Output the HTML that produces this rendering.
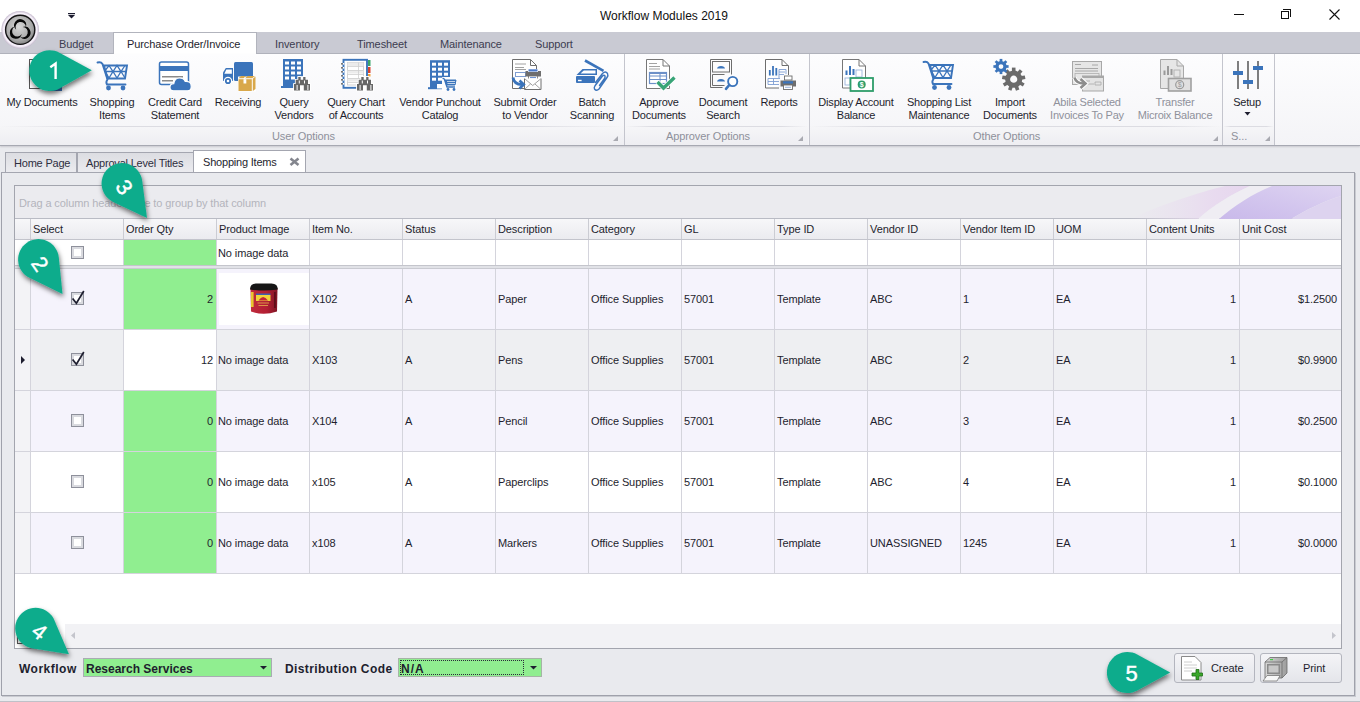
<!DOCTYPE html>
<html><head><meta charset="utf-8">
<style>
*{box-sizing:border-box}
html,body{margin:0;padding:0}
body{width:1360px;height:702px;overflow:hidden;position:relative;font-family:"Liberation Sans",sans-serif;font-size:11px;color:#1e1e2e;background:#e9eaee}
.a{position:absolute}
svg{position:absolute;left:0;top:0}
#title{left:0;top:0;width:1360px;height:32px;background:#fff}
#tabs{left:0;top:32px;width:1360px;height:22px;background:#c9cad3;border-bottom:1px solid #b1b3bc}
.rt{position:absolute;top:33px;height:21px;line-height:22px;color:#3c3c50;font-size:11px}
#rb{left:0;top:54px;width:1360px;height:92px;background:linear-gradient(#fdfdfe,#f4f4f7);border-bottom:1px solid #a7a9b2;box-shadow:0 1px 1.5px rgba(60,60,80,0.18)}
.gstrip{position:absolute;top:126px;height:19px;background:linear-gradient(#f6f6f8,#eeeef2)}
.gstrip::before{content:"";position:absolute;left:0;top:0;width:100%;height:1px;background:linear-gradient(to right,rgba(220,220,226,0),#dcdce2 15%,#dcdce2 85%,rgba(220,220,226,0))}
.sep{position:absolute;top:54px;width:1px;height:91px;background:#c4c5cd}
.lb{position:absolute;width:130px;text-align:center;line-height:13px;font-size:11px;color:#1e1e2e;letter-spacing:-0.2px;white-space:nowrap}
.dis{color:#8f919b}
.glt{position:absolute;top:130px;line-height:13px;font-size:11px;color:#8e909a;letter-spacing:-0.1px;white-space:nowrap}
.dl{position:absolute;top:136px;width:0;height:0;border-left:5px solid transparent;border-bottom:5px solid #a9aab1}
.dt{position:absolute;top:152px;height:20px;border:1px solid #a4a6b0;border-bottom:none;background:linear-gradient(#dcdde2,#ebebef);line-height:20px;padding-left:8px;color:#2e2e3e;letter-spacing:-0.2px}
.hdr{position:absolute;top:219px;height:20px;line-height:20px;padding-left:2px;color:#1e1e2e;letter-spacing:-0.1px}
.vl{position:absolute;width:1px;background:#d4d4dc}
.cell{position:absolute;height:60px;line-height:60px;letter-spacing:-0.1px;white-space:nowrap}
.cb{position:absolute;width:13px;height:13px;border:1px solid #8e909b;background:#fff;box-shadow:inset 0 0 0 2px #d9dadf}
</style></head><body>

<!-- ===== title bar ===== -->
<div id="title" class="a"></div>
<div class="a" style="left:600px;top:9px;font-size:12px;line-height:15px;color:#111">Workflow Modules 2019</div>
<!-- window controls -->
<div class="a" style="left:1234px;top:14px;width:10px;height:1px;background:#111"></div>
<div class="a" style="left:1283px;top:9px;width:8px;height:8px;border:1px solid #111;border-left:none;border-bottom:none"></div>
<div class="a" style="left:1281px;top:11px;width:8px;height:8px;border:1px solid #111;background:#fff"></div>
<svg width="1360" height="40" style="z-index:2">
  <path d="M1329.5 9.5 L1339.5 19.5 M1339.5 9.5 L1329.5 19.5" stroke="#111" stroke-width="1.1"/>
  <rect x="68" y="13" width="7" height="1.2" fill="#1c1c30"/>
  <path d="M68 15 L75 15 L71.5 18.5 Z" fill="#1c1c30"/>
</svg>

<!-- ===== ribbon tabs ===== -->
<div id="tabs" class="a"></div>
<div class="rt" style="left:59px;letter-spacing:-0.1px">Budget</div>
<div class="a" style="left:113px;top:32px;width:144px;height:22px;background:#fff;border:1px solid #b2b4bd;border-bottom:none"></div>
<div class="rt" style="left:127px;letter-spacing:-0.1px;color:#1e1e2e">Purchase Order/Invoice</div>
<div class="rt" style="left:275px;letter-spacing:-0.1px">Inventory</div>
<div class="rt" style="left:357px;letter-spacing:-0.1px">Timesheet</div>
<div class="rt" style="left:440px;letter-spacing:-0.1px">Maintenance</div>
<div class="rt" style="left:535px;letter-spacing:-0.1px">Support</div>

<!-- ===== ribbon body ===== -->
<div id="rb" class="a"></div>
<div class="gstrip" style="left:0;width:624px"></div>
<div class="gstrip" style="left:625px;width:183px"></div>
<div class="gstrip" style="left:810px;width:412px"></div>
<div class="gstrip" style="left:1223px;width:51px"></div>
<div class="sep" style="left:624px"></div>
<div class="sep" style="left:809px"></div>
<div class="sep" style="left:1222px"></div>
<div class="sep" style="left:1274px"></div>

<div class="lb" style="left:-23px;top:96px">My Documents</div>
<div class="lb" style="left:47px;top:96px">Shopping<br>Items</div>
<div class="lb" style="left:110px;top:96px">Credit Card<br>Statement</div>
<div class="lb" style="left:173px;top:96px">Receiving</div>
<div class="lb" style="left:229px;top:96px">Query<br>Vendors</div>
<div class="lb" style="left:291px;top:96px">Query Chart<br>of Accounts</div>
<div class="lb" style="left:375px;top:96px">Vendor Punchout<br>Catalog</div>
<div class="lb" style="left:460px;top:96px">Submit Order<br>to Vendor</div>
<div class="lb" style="left:527px;top:96px">Batch<br>Scanning</div>
<div class="lb" style="left:594px;top:96px">Approve<br>Documents</div>
<div class="lb" style="left:658px;top:96px">Document<br>Search</div>
<div class="lb" style="left:714px;top:96px">Reports</div>
<div class="lb" style="left:791px;top:96px">Display Account<br>Balance</div>
<div class="lb" style="left:874px;top:96px">Shopping List<br>Maintenance</div>
<div class="lb" style="left:945px;top:96px">Import<br>Documents</div>
<div class="lb dis" style="left:1022px;top:96px">Abila Selected<br>Invoices To Pay</div>
<div class="lb dis" style="left:1110px;top:96px">Transfer<br>Microix Balance</div>
<div class="lb" style="left:1182px;top:96px">Setup</div>

<div class="glt" style="left:272px">User Options</div>
<div class="glt" style="left:666px">Approver Options</div>
<div class="glt" style="left:973px">Other Options</div>
<div class="glt" style="left:1231px">S...</div>
<div class="dl" style="left:613px"></div>
<div class="dl" style="left:798px"></div>
<div class="dl" style="left:1213px"></div>
<div class="dl" style="left:1265px"></div>

<!-- ===== doc tabs ===== -->
<div class="dt" style="left:5px;width:72px">Home Page</div>
<div class="dt" style="left:77px;width:117px">Approval Level Titles</div>
<div class="a" style="left:193px;top:150px;width:113px;height:23px;background:#fff;border:1px solid #a4a6b0;border-bottom:none;line-height:22px;padding-left:9px;letter-spacing:-0.2px;color:#1e1e2e">Shopping Items</div>
<svg width="1360" height="702" style="z-index:2"><path d="M290.5 158.5 L298.5 165 M298.5 158.5 L290.5 165" stroke="#84868e" stroke-width="2.6"/></svg>

<!-- ===== content panel ===== -->
<div class="a" style="left:1px;top:172px;width:1354px;height:524px;border:1px solid #9fa1ab;border-top-color:#a4a6b0;background:#e9eaee;box-shadow:1px 1px 0 #c9cbd1"></div>
<div class="a" style="left:0;top:701px;width:1360px;height:1px;background:#bfc1c8"></div>
<!-- grid -->
<div class="a" style="left:14px;top:185px;width:1328px;height:464px;border:1px solid #a3a5ae;background:#fff"></div>
<!-- group panel -->
<div class="a" style="left:15px;top:186px;width:1326px;height:33px;background:#ebebef"></div>
<div class="a" style="left:19px;top:197px;line-height:13px;color:#b3b4bc;letter-spacing:-0.1px">Drag a column header here to group by that column</div>

<!-- overlays (icons etc.) injected below -->
<div class="a" style="left:15px;top:218px;width:1326px;height:1px;background:#b9bbc4"></div>
<div class="a" style="left:15px;top:219px;width:1326px;height:20px;background:linear-gradient(#f7f7f9,#ebebef)"></div>
<div class="a" style="left:15px;top:239px;width:1326px;height:1px;background:#c3c4cc"></div>
<div class="hdr" style="left:31px">Select</div>
<div class="hdr" style="left:124px">Order Qty</div>
<div class="hdr" style="left:217px">Product Image</div>
<div class="hdr" style="left:310px">Item No.</div>
<div class="hdr" style="left:403px">Status</div>
<div class="hdr" style="left:496px">Description</div>
<div class="hdr" style="left:589px">Category</div>
<div class="hdr" style="left:682px">GL</div>
<div class="hdr" style="left:775px">Type ID</div>
<div class="hdr" style="left:868px">Vendor ID</div>
<div class="hdr" style="left:961px">Vendor Item ID</div>
<div class="hdr" style="left:1054px">UOM</div>
<div class="hdr" style="left:1147px">Content Units</div>
<div class="hdr" style="left:1240px">Unit Cost</div>
<div class="a" style="left:30px;top:219px;width:1px;height:20px;background:#cbccd3"></div>
<div class="a" style="left:123px;top:219px;width:1px;height:20px;background:#cbccd3"></div>
<div class="a" style="left:216px;top:219px;width:1px;height:20px;background:#cbccd3"></div>
<div class="a" style="left:309px;top:219px;width:1px;height:20px;background:#cbccd3"></div>
<div class="a" style="left:402px;top:219px;width:1px;height:20px;background:#cbccd3"></div>
<div class="a" style="left:495px;top:219px;width:1px;height:20px;background:#cbccd3"></div>
<div class="a" style="left:588px;top:219px;width:1px;height:20px;background:#cbccd3"></div>
<div class="a" style="left:681px;top:219px;width:1px;height:20px;background:#cbccd3"></div>
<div class="a" style="left:774px;top:219px;width:1px;height:20px;background:#cbccd3"></div>
<div class="a" style="left:867px;top:219px;width:1px;height:20px;background:#cbccd3"></div>
<div class="a" style="left:960px;top:219px;width:1px;height:20px;background:#cbccd3"></div>
<div class="a" style="left:1053px;top:219px;width:1px;height:20px;background:#cbccd3"></div>
<div class="a" style="left:1146px;top:219px;width:1px;height:20px;background:#cbccd3"></div>
<div class="a" style="left:1239px;top:219px;width:1px;height:20px;background:#cbccd3"></div>
<div class="a" style="left:124px;top:240px;width:92px;height:25px;background:#90ee90"></div>
<div class="cell" style="left:218px;top:241px;height:25px;line-height:25px">No image data</div>
<div class="vl" style="left:30px;top:240px;height:25px"></div>
<div class="vl" style="left:123px;top:240px;height:25px"></div>
<div class="vl" style="left:216px;top:240px;height:25px"></div>
<div class="vl" style="left:309px;top:240px;height:25px"></div>
<div class="vl" style="left:402px;top:240px;height:25px"></div>
<div class="vl" style="left:495px;top:240px;height:25px"></div>
<div class="vl" style="left:588px;top:240px;height:25px"></div>
<div class="vl" style="left:681px;top:240px;height:25px"></div>
<div class="vl" style="left:774px;top:240px;height:25px"></div>
<div class="vl" style="left:867px;top:240px;height:25px"></div>
<div class="vl" style="left:960px;top:240px;height:25px"></div>
<div class="vl" style="left:1053px;top:240px;height:25px"></div>
<div class="vl" style="left:1146px;top:240px;height:25px"></div>
<div class="vl" style="left:1239px;top:240px;height:25px"></div>
<div class="cb" style="left:71px;top:246px"></div>
<div class="a" style="left:15px;top:265px;width:1326px;height:1px;background:#c4c5cc"></div>
<div class="a" style="left:15px;top:266px;width:1326px;height:2px;background:#e1e2e7"></div>
<div class="a" style="left:15px;top:268px;width:1326px;height:1px;background:#c9cad1"></div>
<div class="a" style="left:31px;top:269px;width:1310px;height:60px;background:#f5f3fc"></div>
<div class="a" style="left:15px;top:269px;width:15px;height:60px;background:#f3f3f6"></div>
<div class="a" style="left:124px;top:269px;width:92px;height:60px;background:#90ee90"></div>
<div class="a" style="left:15px;top:329px;width:1326px;height:1px;background:#d4d4dc"></div>
<div class="vl" style="left:30px;top:269px;height:60px"></div>
<div class="vl" style="left:123px;top:269px;height:60px"></div>
<div class="vl" style="left:216px;top:269px;height:60px"></div>
<div class="vl" style="left:309px;top:269px;height:60px"></div>
<div class="vl" style="left:402px;top:269px;height:60px"></div>
<div class="vl" style="left:495px;top:269px;height:60px"></div>
<div class="vl" style="left:588px;top:269px;height:60px"></div>
<div class="vl" style="left:681px;top:269px;height:60px"></div>
<div class="vl" style="left:774px;top:269px;height:60px"></div>
<div class="vl" style="left:867px;top:269px;height:60px"></div>
<div class="vl" style="left:960px;top:269px;height:60px"></div>
<div class="vl" style="left:1053px;top:269px;height:60px"></div>
<div class="vl" style="left:1146px;top:269px;height:60px"></div>
<div class="vl" style="left:1239px;top:269px;height:60px"></div>
<div class="cb" style="left:71px;top:292px"></div>
<svg width="1360" height="702" style="left:0;top:0;pointer-events:none"><path d="M72.6 298.5 L76.4 303.3 L83.8 291.0" fill="none" stroke="#1e1e30" stroke-width="1.7"/></svg>
<div class="cell" style="left:124px;top:269px;width:89px;text-align:right">2</div>
<div class="a" style="left:219px;top:273px;width:90px;height:52px;background:#fff"></div>
<!--CAN269-->
<div class="cell" style="left:312px;top:269px">X102</div>
<div class="cell" style="left:405px;top:269px">A</div>
<div class="cell" style="left:498px;top:269px">Paper</div>
<div class="cell" style="left:591px;top:269px">Office Supplies</div>
<div class="cell" style="left:684px;top:269px">57001</div>
<div class="cell" style="left:777px;top:269px">Template</div>
<div class="cell" style="left:870px;top:269px">ABC</div>
<div class="cell" style="left:963px;top:269px">1</div>
<div class="cell" style="left:1056px;top:269px">EA</div>
<div class="cell" style="left:1147px;top:269px;width:89px;text-align:right">1</div>
<div class="cell" style="left:1240px;top:269px;width:97px;text-align:right">$1.2500</div>
<div class="a" style="left:31px;top:330px;width:1310px;height:60px;background:#eeeff2"></div>
<div class="a" style="left:15px;top:330px;width:15px;height:60px;background:#f3f3f6"></div>
<div class="a" style="left:124px;top:330px;width:92px;height:60px;background:#ffffff"></div>
<div class="a" style="left:15px;top:390px;width:1326px;height:1px;background:#d4d4dc"></div>
<div class="vl" style="left:30px;top:330px;height:60px"></div>
<div class="vl" style="left:123px;top:330px;height:60px"></div>
<div class="vl" style="left:216px;top:330px;height:60px"></div>
<div class="vl" style="left:309px;top:330px;height:60px"></div>
<div class="vl" style="left:402px;top:330px;height:60px"></div>
<div class="vl" style="left:495px;top:330px;height:60px"></div>
<div class="vl" style="left:588px;top:330px;height:60px"></div>
<div class="vl" style="left:681px;top:330px;height:60px"></div>
<div class="vl" style="left:774px;top:330px;height:60px"></div>
<div class="vl" style="left:867px;top:330px;height:60px"></div>
<div class="vl" style="left:960px;top:330px;height:60px"></div>
<div class="vl" style="left:1053px;top:330px;height:60px"></div>
<div class="vl" style="left:1146px;top:330px;height:60px"></div>
<div class="vl" style="left:1239px;top:330px;height:60px"></div>
<div class="cb" style="left:71px;top:353px"></div>
<svg width="1360" height="702" style="left:0;top:0;pointer-events:none"><path d="M72.6 359.5 L76.4 364.3 L83.8 352.0" fill="none" stroke="#1e1e30" stroke-width="1.7"/></svg>
<svg width="1360" height="702"><path d="M21 356 L25 360 L21 364 Z" fill="#1e1e30"/></svg>
<div class="cell" style="left:124px;top:330px;width:89px;text-align:right">12</div>
<div class="cell" style="left:218px;top:330px">No image data</div>
<div class="cell" style="left:312px;top:330px">X103</div>
<div class="cell" style="left:405px;top:330px">A</div>
<div class="cell" style="left:498px;top:330px">Pens</div>
<div class="cell" style="left:591px;top:330px">Office Supplies</div>
<div class="cell" style="left:684px;top:330px">57001</div>
<div class="cell" style="left:777px;top:330px">Template</div>
<div class="cell" style="left:870px;top:330px">ABC</div>
<div class="cell" style="left:963px;top:330px">2</div>
<div class="cell" style="left:1056px;top:330px">EA</div>
<div class="cell" style="left:1147px;top:330px;width:89px;text-align:right">1</div>
<div class="cell" style="left:1240px;top:330px;width:97px;text-align:right">$0.9900</div>
<div class="a" style="left:31px;top:391px;width:1310px;height:60px;background:#f5f3fc"></div>
<div class="a" style="left:15px;top:391px;width:15px;height:60px;background:#f3f3f6"></div>
<div class="a" style="left:124px;top:391px;width:92px;height:60px;background:#90ee90"></div>
<div class="a" style="left:15px;top:451px;width:1326px;height:1px;background:#d4d4dc"></div>
<div class="vl" style="left:30px;top:391px;height:60px"></div>
<div class="vl" style="left:123px;top:391px;height:60px"></div>
<div class="vl" style="left:216px;top:391px;height:60px"></div>
<div class="vl" style="left:309px;top:391px;height:60px"></div>
<div class="vl" style="left:402px;top:391px;height:60px"></div>
<div class="vl" style="left:495px;top:391px;height:60px"></div>
<div class="vl" style="left:588px;top:391px;height:60px"></div>
<div class="vl" style="left:681px;top:391px;height:60px"></div>
<div class="vl" style="left:774px;top:391px;height:60px"></div>
<div class="vl" style="left:867px;top:391px;height:60px"></div>
<div class="vl" style="left:960px;top:391px;height:60px"></div>
<div class="vl" style="left:1053px;top:391px;height:60px"></div>
<div class="vl" style="left:1146px;top:391px;height:60px"></div>
<div class="vl" style="left:1239px;top:391px;height:60px"></div>
<div class="cb" style="left:71px;top:414px"></div>
<div class="cell" style="left:124px;top:391px;width:89px;text-align:right">0</div>
<div class="cell" style="left:218px;top:391px">No image data</div>
<div class="cell" style="left:312px;top:391px">X104</div>
<div class="cell" style="left:405px;top:391px">A</div>
<div class="cell" style="left:498px;top:391px">Pencil</div>
<div class="cell" style="left:591px;top:391px">Office Supplies</div>
<div class="cell" style="left:684px;top:391px">57001</div>
<div class="cell" style="left:777px;top:391px">Template</div>
<div class="cell" style="left:870px;top:391px">ABC</div>
<div class="cell" style="left:963px;top:391px">3</div>
<div class="cell" style="left:1056px;top:391px">EA</div>
<div class="cell" style="left:1147px;top:391px;width:89px;text-align:right">1</div>
<div class="cell" style="left:1240px;top:391px;width:97px;text-align:right">$0.2500</div>
<div class="a" style="left:31px;top:452px;width:1310px;height:60px;background:#ffffff"></div>
<div class="a" style="left:15px;top:452px;width:15px;height:60px;background:#f3f3f6"></div>
<div class="a" style="left:124px;top:452px;width:92px;height:60px;background:#90ee90"></div>
<div class="a" style="left:15px;top:512px;width:1326px;height:1px;background:#d4d4dc"></div>
<div class="vl" style="left:30px;top:452px;height:60px"></div>
<div class="vl" style="left:123px;top:452px;height:60px"></div>
<div class="vl" style="left:216px;top:452px;height:60px"></div>
<div class="vl" style="left:309px;top:452px;height:60px"></div>
<div class="vl" style="left:402px;top:452px;height:60px"></div>
<div class="vl" style="left:495px;top:452px;height:60px"></div>
<div class="vl" style="left:588px;top:452px;height:60px"></div>
<div class="vl" style="left:681px;top:452px;height:60px"></div>
<div class="vl" style="left:774px;top:452px;height:60px"></div>
<div class="vl" style="left:867px;top:452px;height:60px"></div>
<div class="vl" style="left:960px;top:452px;height:60px"></div>
<div class="vl" style="left:1053px;top:452px;height:60px"></div>
<div class="vl" style="left:1146px;top:452px;height:60px"></div>
<div class="vl" style="left:1239px;top:452px;height:60px"></div>
<div class="cb" style="left:71px;top:475px"></div>
<div class="cell" style="left:124px;top:452px;width:89px;text-align:right">0</div>
<div class="cell" style="left:218px;top:452px">No image data</div>
<div class="cell" style="left:312px;top:452px">x105</div>
<div class="cell" style="left:405px;top:452px">A</div>
<div class="cell" style="left:498px;top:452px">Paperclips</div>
<div class="cell" style="left:591px;top:452px">Office Supplies</div>
<div class="cell" style="left:684px;top:452px">57001</div>
<div class="cell" style="left:777px;top:452px">Template</div>
<div class="cell" style="left:870px;top:452px">ABC</div>
<div class="cell" style="left:963px;top:452px">4</div>
<div class="cell" style="left:1056px;top:452px">EA</div>
<div class="cell" style="left:1147px;top:452px;width:89px;text-align:right">1</div>
<div class="cell" style="left:1240px;top:452px;width:97px;text-align:right">$0.1000</div>
<div class="a" style="left:31px;top:513px;width:1310px;height:60px;background:#f5f3fc"></div>
<div class="a" style="left:15px;top:513px;width:15px;height:60px;background:#f3f3f6"></div>
<div class="a" style="left:124px;top:513px;width:92px;height:60px;background:#90ee90"></div>
<div class="a" style="left:15px;top:573px;width:1326px;height:1px;background:#d4d4dc"></div>
<div class="vl" style="left:30px;top:513px;height:60px"></div>
<div class="vl" style="left:123px;top:513px;height:60px"></div>
<div class="vl" style="left:216px;top:513px;height:60px"></div>
<div class="vl" style="left:309px;top:513px;height:60px"></div>
<div class="vl" style="left:402px;top:513px;height:60px"></div>
<div class="vl" style="left:495px;top:513px;height:60px"></div>
<div class="vl" style="left:588px;top:513px;height:60px"></div>
<div class="vl" style="left:681px;top:513px;height:60px"></div>
<div class="vl" style="left:774px;top:513px;height:60px"></div>
<div class="vl" style="left:867px;top:513px;height:60px"></div>
<div class="vl" style="left:960px;top:513px;height:60px"></div>
<div class="vl" style="left:1053px;top:513px;height:60px"></div>
<div class="vl" style="left:1146px;top:513px;height:60px"></div>
<div class="vl" style="left:1239px;top:513px;height:60px"></div>
<div class="cb" style="left:71px;top:536px"></div>
<div class="cell" style="left:124px;top:513px;width:89px;text-align:right">0</div>
<div class="cell" style="left:218px;top:513px">No image data</div>
<div class="cell" style="left:312px;top:513px">x108</div>
<div class="cell" style="left:405px;top:513px">A</div>
<div class="cell" style="left:498px;top:513px">Markers</div>
<div class="cell" style="left:591px;top:513px">Office Supplies</div>
<div class="cell" style="left:684px;top:513px">57001</div>
<div class="cell" style="left:777px;top:513px">Template</div>
<div class="cell" style="left:870px;top:513px">UNASSIGNED</div>
<div class="cell" style="left:963px;top:513px">1245</div>
<div class="cell" style="left:1056px;top:513px">EA</div>
<div class="cell" style="left:1147px;top:513px;width:89px;text-align:right">1</div>
<div class="cell" style="left:1240px;top:513px;width:97px;text-align:right">$0.0000</div>
<div class="a" style="left:65px;top:624px;width:1276px;height:24px;background:#f2f2f5"></div>
<div class="a" style="left:17px;top:636px;width:8px;height:8px;border:1px solid #555"></div>
<svg width="1360" height="702"><path d="M71 635.5 L75 632 L75 639 Z" fill="#c4c5cc"/><path d="M1332 632 L1336 635.5 L1332 639 Z" fill="#c4c5cc"/></svg>
<div class="a" style="left:19px;top:662px;font-weight:bold;font-size:12px;line-height:14px;letter-spacing:0.5px;color:#1e1e2e">Workflow</div>
<div class="a" style="left:83px;top:658px;width:189px;height:19px;background:#90ee90;border:1px solid #a9abb3"></div>
<div class="a" style="left:86px;top:662px;font-weight:bold;font-size:12px;line-height:14px;color:#1e1e2e">Research Services</div>
<div class="a" style="left:285px;top:662px;font-weight:bold;font-size:12px;line-height:14px;letter-spacing:0.4px;color:#1e1e2e">Distribution Code</div>
<div class="a" style="left:398px;top:658px;width:144px;height:19px;background:#90ee90;border:1px solid #a6b4a6"></div>
<div class="a" style="left:400px;top:660px;width:124px;height:15px;border:1px dotted #2a2a3a"></div>
<div class="a" style="left:401px;top:662px;font-weight:bold;font-size:12px;line-height:14px;letter-spacing:1px;color:#1e1e2e">N/A</div>
<svg width="1360" height="702"><path d="M260 666 L267 666 L263.5 669.5 Z" fill="#1e1e30"/><path d="M530 666 L537 666 L533.5 669.5 Z" fill="#1e1e30"/></svg>
<div class="a" style="left:1174px;top:653px;width:81px;height:30px;border:1px solid #b3b5be;border-radius:3px;background:linear-gradient(#f4f4f7,#e4e5ea)"></div>
<div class="a" style="left:1211px;top:662px;line-height:13px;color:#1e1e2e;letter-spacing:-0.1px">Create</div>
<div class="a" style="left:1260px;top:653px;width:82px;height:30px;border:1px solid #b3b5be;border-radius:3px;background:linear-gradient(#f4f4f7,#e4e5ea)"></div>
<div class="a" style="left:1303px;top:662px;line-height:13px;color:#1e1e2e;letter-spacing:-0.1px">Print</div>
<svg width="1360" height="702" style="z-index:3">
<defs>
  <radialGradient id="lg" cx="40%" cy="35%" r="70%"><stop offset="0" stop-color="#e6e6e6"/><stop offset="0.6" stop-color="#9a9a9a"/><stop offset="1" stop-color="#3a3a3a"/></radialGradient>
  <radialGradient id="ring" cx="50%" cy="50%" r="50%"><stop offset="0.8" stop-color="#c9b3dc"/><stop offset="0.92" stop-color="#ecdff5"/><stop offset="1" stop-color="#9d92a8"/></radialGradient>
  <linearGradient id="sw" x1="0" y1="0" x2="1" y2="1"><stop offset="0" stop-color="#f3eefa" stop-opacity="0"/><stop offset="0.5" stop-color="#d9cdee"/><stop offset="1" stop-color="#c9b8ea"/></linearGradient>
</defs>

<!-- app logo -->
<defs>
<radialGradient id="lg2" cx="45%" cy="40%" r="65%"><stop offset="0" stop-color="#d8d8d8"/><stop offset="0.7" stop-color="#a8a8a8"/><stop offset="1" stop-color="#7a7a7a"/></radialGradient>
<radialGradient id="ring2" cx="50%" cy="50%" r="50%"><stop offset="0.75" stop-color="#e8dcf0"/><stop offset="0.88" stop-color="#f7f2fa"/><stop offset="1" stop-color="#c4b8cc"/></radialGradient>
</defs>
<circle cx="20.2" cy="29.8" r="18.8" fill="url(#ring2)"/>
<circle cx="20.2" cy="29.8" r="14.6" fill="url(#lg2)" stroke="#151515" stroke-width="1.4"/>
<g transform="translate(20.2 30.2)" fill="#080808"><g><path d="M5.05 3.24 A6 6 0 1 0 -5.05 3.24 A5.2 5.2 0 1 1 5.05 3.24 Z" transform="translate(0 -5) rotate(-15)"/></g><g transform="rotate(120)"><path d="M5.05 3.24 A6 6 0 1 0 -5.05 3.24 A5.2 5.2 0 1 1 5.05 3.24 Z" transform="translate(0 -5) rotate(-15)"/></g><g transform="rotate(240)"><path d="M5.05 3.24 A6 6 0 1 0 -5.05 3.24 A5.2 5.2 0 1 1 5.05 3.24 Z" transform="translate(0 -5) rotate(-15)"/></g></g>
<!-- group panel swirl -->
<defs>
<linearGradient id="pk" x1="0" y1="0" x2="1" y2="0"><stop offset="0" stop-color="#e9dff0" stop-opacity="0"/><stop offset="0.7" stop-color="#e8d9ef" stop-opacity="0.9"/><stop offset="1" stop-color="#e6d6ee"/></linearGradient>
<linearGradient id="pu" x1="0" y1="1" x2="1" y2="0"><stop offset="0" stop-color="#c9b9ea"/><stop offset="0.5" stop-color="#d3c6ee"/><stop offset="1" stop-color="#ded4f1"/></linearGradient>
</defs>
<path d="M1130 219 C1160 205 1200 192 1225 186 L1250 186 C1232 194 1212 206 1198 219 Z" fill="url(#pk)"/>
<path d="M1198 219 C1212 206 1232 194 1250 186 L1272 186 C1252 194 1234 206 1219 219 Z" fill="#efedf3"/>
<path d="M1219 219 C1234 206 1252 194 1272 186 L1341 186 L1341 196 C1322 202 1306 210 1291 219 Z" fill="url(#pu)"/>
<path d="M1291 219 C1306 210 1322 202 1341 196 L1341 219 Z" fill="#ddd3ef"/>
<!-- My Documents (mostly covered) -->
<rect x="29.5" y="59.5" width="25" height="29" fill="#fff" stroke="#555" stroke-width="1"/>
<rect x="48" y="84" width="14" height="7" fill="#3b74bb"/>

<!-- Shopping cart -->
<g id="cart">
<path d="M97.5 62.5 Q101 61.5 102.5 64 L107.5 79.5 Q105.5 82 107 84.5 L125.5 84.5" fill="none" stroke="#3b74bb" stroke-width="1.9" stroke-linecap="round"/>
<path d="M104 65.5 L127 65.5 L125 78.5 L107.5 78.5 Z" fill="none" stroke="#3b74bb" stroke-width="1.9"/>
<path d="M105.5 70 L109 65.5 L113 71.5 L109 78 L105.5 72 M109 65.5 L113 71.5 L117 65.5 L121 71.5 L117 78 L113 71.5 L109 78 M117 65.5 L121 71.5 L125 65.5 M121 71.5 L125 78 M117 78 L121 71.5 M106 71.5 L126.5 71.5" fill="none" stroke="#3b74bb" stroke-width="1.3"/>
<circle cx="108.5" cy="88" r="2.4" fill="#3b74bb"/>
<circle cx="123" cy="88" r="2.4" fill="#3b74bb"/>
</g>

<!-- Credit card -->
<rect x="159.5" y="62" width="29" height="22.5" rx="2" fill="#fff" stroke="#3b74bb" stroke-width="1.5"/>
<rect x="159.5" y="66" width="29" height="5" fill="#3b74bb"/>
<path d="M162 76.8 L183 76.8 M162 80.8 L173 80.8" stroke="#8a8a8a" stroke-width="1.4"/>
<path d="M173.5 90.8 Q170 90.8 170 87.2 Q170 83.6 173.8 83.6 Q174.6 78 179.6 78 Q183.6 78 185.2 81.4 Q191.2 81 191.2 86.4 Q191.2 90.8 187.4 90.8 Z" fill="#3b74bb" stroke="#fff" stroke-width="1.1"/>

<!-- Receiving truck -->
<rect x="234" y="62" width="19" height="19" rx="1.5" fill="#3b74bb"/>
<path d="M223 81 L223 72.5 L225.8 68 L233 68 L233 81 Z" fill="#3b74bb"/>
<path d="M224.3 73.8 L226.4 69.4 L231.8 69.4 L231.8 73.8 Z" fill="#fff"/>
<circle cx="228" cy="81" r="3.7" fill="#3b74bb" stroke="#fff" stroke-width="1.2"/>
<circle cx="228" cy="81" r="1.3" fill="#fff"/>
<path d="M238 91.5 L238 76.5 L256 76.5 L256 91.5 Z" fill="#fff"/>
<path d="M238.5 79.2 L251.8 79.2 L251.8 91 L238.5 91 Z" fill="#d9a84b"/>
<path d="M252.8 78.8 L255.5 76.5 L255.5 89 L252.8 91 Z" fill="#d9a84b"/>
<path d="M238.5 78.3 L241 76 L246 76 L243.5 78.3 Z M245 78.3 L247.5 76 L255 76 L252.2 78.3 Z" fill="#d9a84b"/>
<rect x="243.5" y="79.2" width="2.8" height="4.3" fill="#fff"/>
<!-- Query Vendors building + binoculars -->
<g id="bld">
<rect x="283" y="59" width="20" height="28.5" fill="#3b74bb"/>
<rect x="281" y="86" width="16" height="2" fill="#3b74bb"/>
<g fill="#fff">
<rect x="285" y="61.5" width="4" height="3"/><rect x="291" y="61.5" width="4" height="3"/><rect x="297" y="61.5" width="4" height="3"/>
<rect x="285" y="66.5" width="4" height="3"/><rect x="291" y="66.5" width="4" height="3"/><rect x="297" y="66.5" width="4" height="3"/>
<rect x="285" y="71.5" width="4" height="3"/><rect x="291" y="71.5" width="4" height="3"/><rect x="297" y="71.5" width="4" height="3"/>
<rect x="285" y="76.5" width="4" height="3"/><rect x="291" y="76.5" width="4" height="3"/>
</g>
</g>
<g id="bino">
<path d="M293.5 91 L293.5 83.5 L295 83.5 L295 79 L297.5 79 L297.5 76.3 L306 76.3 L306 79 L308.5 79 L308.5 83.5 L310.5 83.5 L310.5 91 Z" fill="#fff"/>
<path d="M 294.0 90.6 L 294.0 84.0 L 295.7 84.0 L 295.7 79.8 L 298.3 79.8 L 298.3 77.0 L 300.7 77.0 L 300.7 79.8 L 303.2 79.8 L 303.2 77.0 L 305.5 77.0 L 305.5 79.8 L 308.0 79.8 L 308.0 84.0 L 310.0 84.0 L 310.0 90.6 L 303.8 90.6 L 303.8 85.2 L 300.0 85.2 L 300.0 90.6 Z" fill="#fff" stroke="#fff" stroke-width="1.6"/>
<path d="M 294.0 90.6 L 294.0 84.0 L 295.7 84.0 L 295.7 79.8 L 298.3 79.8 L 298.3 77.0 L 300.7 77.0 L 300.7 79.8 L 303.2 79.8 L 303.2 77.0 L 305.5 77.0 L 305.5 79.8 L 308.0 79.8 L 308.0 84.0 L 310.0 84.0 L 310.0 90.6 L 303.8 90.6 L 303.8 85.2 L 300.0 85.2 L 300.0 90.6 Z" fill="#676767"/>
<rect x="298.8" y="80.5" width="1" height="3" fill="#fff"/><rect x="304.0" y="80.5" width="1" height="3" fill="#fff"/>
<rect x="296.6" y="85" width="1" height="5" fill="#fff"/><rect x="307.4" y="85" width="1" height="5" fill="#fff"/>
</g>

<!-- Query Chart of Accounts -->
<rect x="343.5" y="59.8" width="23.5" height="28" fill="#fff" stroke="#3b74bb" stroke-width="1.9"/>
<rect x="347.5" y="62.5" width="16" height="22.5" fill="#fff" stroke="#cfcfcf" stroke-width="0.9"/>
<rect x="347.5" y="62.5" width="16" height="3.5" fill="#ececec"/><rect x="347.5" y="70" width="16" height="3.5" fill="#ececec"/><rect x="347.5" y="78" width="16" height="3.5" fill="#ececec"/>
<path d="M347.5 66.5 L363.5 66.5 M347.5 70.5 L363.5 70.5 M347.5 74.5 L363.5 74.5 M347.5 78.5 L363.5 78.5 M347.5 82.5 L363.5 82.5 M358.5 62.5 L358.5 85" stroke="#cfcfcf" stroke-width="0.8"/>
<g fill="#777"><rect x="341" y="63" width="2" height="1.6"/><rect x="341" y="67" width="2" height="1.6"/><rect x="341" y="71" width="2" height="1.6"/><rect x="341" y="75" width="2" height="1.6"/><rect x="341" y="79" width="2" height="1.6"/><rect x="341" y="83" width="2" height="1.6"/></g>
<g fill="#fff"><rect x="343" y="63" width="1.2" height="1.6"/><rect x="343" y="67" width="1.2" height="1.6"/><rect x="343" y="71" width="1.2" height="1.6"/><rect x="343" y="75" width="1.2" height="1.6"/><rect x="343" y="79" width="1.2" height="1.6"/><rect x="343" y="83" width="1.2" height="1.6"/></g>
<rect x="368" y="60" width="2.5" height="6" fill="#3aa66a"/>
<rect x="368" y="67" width="2.5" height="6" fill="#d9452e"/>
<rect x="368" y="74" width="2.5" height="2.5" fill="#f2a33a"/>
<use href="#bino" x="63" y="0"/>

<!-- Vendor Punchout building+cart -->
<use href="#bld" x="147" y="1.2"/>
<rect x="437" y="84" width="6" height="4.5" fill="#fff"/>
<rect x="442" y="77" width="15" height="14" fill="#fdfdfd"/>
<path d="M442.5 78.5 Q444 78 444.5 79.5 L447 87 L455 87" fill="none" stroke="#3b74bb" stroke-width="1.4"/>
<path d="M445 80 L456 80 L455 85 L446.5 85 Z" fill="#3b74bb" stroke="#3b74bb" stroke-width="1"/>
<path d="M447 81.5 L455 81.5 M447.5 83.5 L455 83.5" stroke="#fff" stroke-width="0.7"/>
<circle cx="448" cy="89.5" r="1.4" fill="#3b74bb"/><circle cx="454" cy="89.5" r="1.4" fill="#3b74bb"/>

<!-- Submit Order to Vendor -->
<path d="M512.5 59.5 L530.5 59.5 L536.5 65.5 L536.5 88.5 L512.5 88.5 Z" fill="#fff" stroke="#6e6e6e" stroke-width="1"/>
<path d="M530.5 59.5 L530.5 65.5 L536.5 65.5" fill="none" stroke="#6e6e6e" stroke-width="1"/>
<path d="M515 64 L526 64 M515 67.5 L524 67.5 M515 69.5 L526 69.5" stroke="#8a8a8a" stroke-width="0.8"/>
<rect x="515.5" y="72.5" width="10" height="4" fill="none" stroke="#7f9ed3" stroke-width="1"/>
<rect x="525.5" y="71" width="15.5" height="5.5" fill="#6e6e6e"/>
<rect x="528" y="69" width="10" height="3" fill="#fff"/>
<rect x="528.5" y="69.3" width="9" height="2.2" fill="#4a78c9"/>
<rect x="528.5" y="76" width="9" height="3.5" fill="#fff" stroke="#6e6e6e" stroke-width="0.8"/>
<rect x="530" y="77.2" width="6" height="0.9" fill="#4a78c9"/>
<path d="M524.5 78.5 L524.5 89.5 L541 89.5 L541 78.5" fill="#fff" stroke="#6e6e6e" stroke-width="1"/>
<path d="M525 79 L532.7 85.5 L540.5 79 M525 89 L530.5 84 M540.5 89 L535 84" fill="none" stroke="#8a8a8a" stroke-width="0.8"/>
<path d="M513 77.5 Q514 84.5 522 84.5" fill="none" stroke="#3b74bb" stroke-width="2.8"/>
<path d="M519.5 80.5 L523.8 84.5 L519.5 88.5" fill="none" stroke="#3b74bb" stroke-width="2.6"/>
<!-- Batch Scanning -->
<path d="M585 60.5 L603.5 70.8" stroke="#3b74bb" stroke-width="2.6"/>
<path d="M576.5 75 L582.5 69 L597 69 L597 75 Z" fill="#3b74bb"/>
<path d="M580.5 73.6 L583.8 70.6 L595.5 70.6 L595.5 73.6 Z" fill="#fff"/>
<rect x="576" y="76" width="19" height="7" rx="1" fill="#3b74bb"/>
<rect x="578" y="79.8" width="3.6" height="1.4" fill="#fff"/>
<path d="M595.5 82.5 L602.5 73.5 Q605.5 70.5 607.5 73.5 Q608.5 75.5 607 77.5 L599 89 Q596.5 91.5 594.5 89 Q593.8 87.5 595 85.8 L602.5 76 Q604 74.5 605 76 Q605.5 77 604.5 78.5 L599.5 85.5" fill="none" stroke="#3b74bb" stroke-width="1.4" stroke-linecap="round" stroke-linejoin="round"/>
<!-- Approve Documents -->
<path d="M646.5 59.5 L663 59.5 L669.5 66 L669.5 88.5 L646.5 88.5 Z" fill="#fff" stroke="#777" stroke-width="1"/>
<path d="M663 59.5 L663 66 L669.5 66" fill="none" stroke="#777" stroke-width="1"/>
<path d="M649 63.5 L657 63.5 M649 66.5 L660 66.5 M649 69 L660 69" stroke="#999" stroke-width="0.9"/>
<rect x="649.5" y="72.5" width="17" height="11" fill="none" stroke="#6d90c8" stroke-width="1.2"/><rect x="649.5" y="72.5" width="17" height="1.5" fill="#6d90c8"/>
<path d="M649.5 76 L666.5 76 M649.5 79.5 L666.5 79.5 M660 72.5 L660 83.5" stroke="#6d90c8" stroke-width="1"/>
<path d="M657.5 82 L663.5 88 L674.5 77.5" fill="none" stroke="#fff" stroke-width="5"/><path d="M657.5 82 L663.5 88 L674.5 77.5" fill="none" stroke="#38a477" stroke-width="3.4"/>

<!-- Document Search -->
<path d="M722.5 87.5 L710.5 87.5 L710.5 59.5 L731.5 59.5 L731.5 74.5" fill="none" stroke="#6e6e6e" stroke-width="1"/>
<rect x="712.5" y="61.5" width="17" height="10.5" fill="none" stroke="#6e6e6e" stroke-width="1"/>
<path d="M724.5 74.5 L712.5 74.5 L712.5 85.5 L724.5 85.5" fill="none" stroke="#6e6e6e" stroke-width="1"/>
<path d="M717 68.5 Q717.5 66 721 66 Q724.5 66 725 68.5 Z" fill="#3b74bb"/>
<path d="M717 81.5 Q717.5 79 721 79 Q724.5 79 725 81.5 Z" fill="#3b74bb"/>
<circle cx="732.7" cy="81.5" r="4.6" fill="#fff" stroke="#3b74bb" stroke-width="1.9"/>
<path d="M729.3 85 L726 88.8" stroke="#3b74bb" stroke-width="2.6" stroke-linecap="round"/>

<!-- Reports -->
<path d="M765.5 59.5 L782 59.5 L788.5 66 L788.5 75 M779 88 L765.5 88 L765.5 59.5" fill="#fff" stroke="#6e6e6e" stroke-width="1"/>
<path d="M782 59.5 L782 65.5 L788.5 65.5" fill="none" stroke="#6e6e6e" stroke-width="1"/>
<path d="M769.8 75.5 L769.8 70 M773 75.5 L773 66 M776.3 75.5 L776.3 68" stroke="#3b74bb" stroke-width="1.8"/>
<path d="M779 69.5 L786 69.5 L786 74 M779 69.5 L779 78 M779 72 L785 72 M779 74.5 L784 74.5" fill="none" stroke="#7f9ed3" stroke-width="0.9"/>
<path d="M768 78.5 L780 78.5 M768 81.5 L779 81.5 M768 84.5 L779 84.5 M768 78.5 L768 84.5 M773.5 78.5 L773.5 84.5" fill="none" stroke="#7f9ed3" stroke-width="0.9"/>
<rect x="784.5" y="76" width="7.5" height="4" fill="#fff" stroke="#6e6e6e" stroke-width="0.9"/>
<path d="M780.5 86.5 L780.5 80.5 L796 80.5 L796 86.5 Z" fill="#6e6e6e"/>
<rect x="783" y="81.3" width="10" height="2.2" fill="#3b74bb"/>
<rect x="783.5" y="85" width="9" height="4.5" fill="#fff" stroke="#6e6e6e" stroke-width="0.9"/>
<rect x="785" y="86.8" width="6" height="0.8" fill="#7f9ed3"/>

<!-- Display Account Balance -->
<path d="M842.5 59.5 L859 59.5 L865.5 66 L865.5 88 L842.5 88 Z" fill="#fff" stroke="#777" stroke-width="1"/>
<path d="M859 59.5 L859 66 L865.5 66" fill="none" stroke="#777" stroke-width="1"/>
<path d="M846.5 75 L846.5 70.5 M850 75 L850 66 M853.5 75 L853.5 69" stroke="#3b74bb" stroke-width="2"/>
<rect x="856" y="70" width="6" height="7" fill="none" stroke="#9bb4dc" stroke-width="0.9"/>
<rect x="845" y="78" width="5" height="7" fill="none" stroke="#9bb4dc" stroke-width="0.9"/>
<rect x="850.5" y="78" width="22.5" height="13" fill="#fff" stroke="#2e9d6a" stroke-width="1.8"/>
<circle cx="861.7" cy="84.5" r="4" fill="#2e9d6a"/>
<text x="861.7" y="87.3" font-family="Liberation Sans" font-size="7" font-weight="bold" fill="#fff" text-anchor="middle">$</text>

<!-- Shopping List Maintenance cart -->
<use href="#cart" x="826" y="-0.5"/>

<!-- Import Documents gears -->
<g transform="translate(1013.70 79.20)" fill="#6b6b6b"><circle r="6.10" fill="none" stroke="#6b6b6b" stroke-width="5.00"/><rect x="-1.80" y="-11.60" width="3.60" height="4.00" transform="rotate(0.0)"/><rect x="-1.80" y="-11.60" width="3.60" height="4.00" transform="rotate(40.0)"/><rect x="-1.80" y="-11.60" width="3.60" height="4.00" transform="rotate(80.0)"/><rect x="-1.80" y="-11.60" width="3.60" height="4.00" transform="rotate(120.0)"/><rect x="-1.80" y="-11.60" width="3.60" height="4.00" transform="rotate(160.0)"/><rect x="-1.80" y="-11.60" width="3.60" height="4.00" transform="rotate(200.0)"/><rect x="-1.80" y="-11.60" width="3.60" height="4.00" transform="rotate(240.0)"/><rect x="-1.80" y="-11.60" width="3.60" height="4.00" transform="rotate(280.0)"/><rect x="-1.80" y="-11.60" width="3.60" height="4.00" transform="rotate(320.0)"/></g>
<g transform="translate(1001.00 66.50)" fill="#3b74bb"><circle r="3.95" fill="none" stroke="#3b74bb" stroke-width="3.30"/><rect x="-1.35" y="-7.60" width="2.70" height="3.00" transform="rotate(0.0)"/><rect x="-1.35" y="-7.60" width="2.70" height="3.00" transform="rotate(45.0)"/><rect x="-1.35" y="-7.60" width="2.70" height="3.00" transform="rotate(90.0)"/><rect x="-1.35" y="-7.60" width="2.70" height="3.00" transform="rotate(135.0)"/><rect x="-1.35" y="-7.60" width="2.70" height="3.00" transform="rotate(180.0)"/><rect x="-1.35" y="-7.60" width="2.70" height="3.00" transform="rotate(225.0)"/><rect x="-1.35" y="-7.60" width="2.70" height="3.00" transform="rotate(270.0)"/><rect x="-1.35" y="-7.60" width="2.70" height="3.00" transform="rotate(315.0)"/></g>
<!-- Abila Selected (disabled) -->
<rect x="1072.5" y="61.5" width="29" height="23" fill="#e6e6e6" stroke="#a8a8a8" stroke-width="1"/>
<path d="M1075 64.5 L1081 64.5 M1092 65 L1098 65 M1075 68.5 L1098 68.5 M1075 71 L1098 71" stroke="#a0a0a0" stroke-width="0.9"/>
<rect x="1075" y="73.5" width="24" height="8" fill="none" stroke="#b0b0b0" stroke-width="0.8"/>
<rect x="1082.5" y="76" width="21" height="15" fill="#e4e4e4" stroke="#a8a8a8" stroke-width="1"/>
<rect x="1082.5" y="76" width="21" height="2" fill="#a8a8a8"/>
<path d="M1086 81 L1090 81 M1086 84 L1094 84 M1095 82 L1101 82 L1101 85 L1095 85 Z" stroke="#a8a8a8" stroke-width="0.8" fill="none"/>
<path d="M1074.5 77.5 Q1076 83.5 1084 83.5" fill="none" stroke="#fff" stroke-width="4.5"/><path d="M1080.5 79 L1085.5 83.5 L1080.5 88" fill="none" stroke="#fff" stroke-width="4.5"/><path d="M1074.5 77.5 Q1076 83.5 1084 83.5" fill="none" stroke="#8c8c8c" stroke-width="2.6"/><path d="M1080.5 79 L1085.5 83.5 L1080.5 88" fill="none" stroke="#8c8c8c" stroke-width="2.6"/>

<!-- Transfer Microix Balance (disabled) -->
<path d="M1160.5 59.5 L1177 59.5 L1183.5 66 L1183.5 88.5 L1160.5 88.5 Z" fill="#e6e6e6" stroke="#a8a8a8" stroke-width="1"/>
<path d="M1177 59.5 L1177 66 L1183.5 66" fill="none" stroke="#a8a8a8" stroke-width="1"/>
<path d="M1164.5 75 L1164.5 70.5 M1168 75 L1168 66 M1171.5 75 L1171.5 69" stroke="#9a9a9a" stroke-width="2"/>
<rect x="1174" y="70" width="6" height="7" fill="none" stroke="#b0b0b0" stroke-width="0.9"/>
<rect x="1168.5" y="78.5" width="22.5" height="12.5" fill="#e0e0e0" stroke="#a0a0a0" stroke-width="1.6"/>
<circle cx="1179.7" cy="84.7" r="4" fill="none" stroke="#9a9a9a" stroke-width="1.2"/>
<text x="1179.7" y="87.3" font-family="Liberation Sans" font-size="7" fill="#9a9a9a" text-anchor="middle">$</text>

<!-- Setup sliders -->
<path d="M1238 61 L1238 89 M1248 61 L1248 89 M1258 61 L1258 89" stroke="#4a4a4a" stroke-width="1.4"/>
<rect x="1233" y="71" width="10" height="4" fill="#3b74bb"/>
<rect x="1243" y="80" width="10" height="4" fill="#3b74bb"/>
<rect x="1253" y="66" width="10" height="4" fill="#3b74bb"/>
<path d="M1244.5 112 L1250.5 112 L1247.5 115.5 Z" fill="#1e1e30"/>

<!-- coffee can -->
<defs><linearGradient id="cang" x1="0" y1="0" x2="1" y2="0"><stop offset="0" stop-color="#c02a3c"/><stop offset="0.6" stop-color="#b31f33"/><stop offset="1" stop-color="#7e1424"/></linearGradient></defs>
<path d="M250.5 288 L277.5 288 L277 311.5 Q263.5 316 251 311.5 Z" fill="url(#cang)"/>
<path d="M250 289.5 Q250 283.5 256 283.5 L271.5 283.5 Q277.8 283.5 277.8 289.5 Q263.5 291.5 250 289.5 Z" fill="#161616"/>
<rect x="256" y="293.5" width="14.5" height="1.6" fill="#3d5fb0"/>
<rect x="256" y="295" width="14.5" height="6" fill="#f0d23a"/>
<path d="M258.5 300.5 Q263 293.5 268 300.5 Z" fill="#c42536"/>
<rect x="251" y="292" width="2.6" height="15" fill="#e8c530"/>
<rect x="274" y="292" width="1.8" height="16" fill="#5e0c18"/>
<path d="M257.5 303 L269 303 M258.5 305.5 L268 305.5" stroke="#e0a04a" stroke-width="0.9"/>
<!-- create icon -->
<path d="M1181.5 656.5 L1195 656.5 L1201 662.5 L1201 680 L1181.5 680 Z" fill="#fff" stroke="#8a8a8a" stroke-width="1"/>
<path d="M1184 662 L1192 662 M1184 665 L1197 665 M1184 668 L1197 668 M1184 671 L1192 671" stroke="#c8c8c8" stroke-width="0.9"/>
<path d="M1192 673 L1196 673 L1196 669.5 L1199 669.5 L1199 673 L1202.5 673 L1202.5 676 L1199 676 L1199 679.5 L1196 679.5 L1196 676 L1192 676 Z" fill="#3aa82a" stroke="#1f6d17" stroke-width="0.8"/>

<!-- print icon -->
<defs><linearGradient id="pg" x1="0" y1="0" x2="1" y2="0"><stop offset="0" stop-color="#d8d8d8"/><stop offset="1" stop-color="#9c9c9c"/></linearGradient></defs>
<path d="M1265 662 L1270 657.5 L1287 657.5 L1287 673 L1282 678 L1265 678 Z" fill="url(#pg)" stroke="#6a6a6a" stroke-width="0.8"/>
<path d="M1265 662 L1282 662 L1287 657.5 M1282 662 L1282 678" fill="none" stroke="#6a6a6a" stroke-width="0.8"/>
<rect x="1267" y="664" width="13" height="10" fill="#8a8a8a"/>
<rect x="1268.5" y="665.5" width="10" height="7" fill="#c8c8c8"/>
<path d="M1263 681 L1267 675.5 L1280 675.5 L1277 681 Z" fill="#f7f7f7" stroke="#777" stroke-width="0.8"/>
<rect x="1270" y="659" width="3" height="1.2" fill="#4c4"/>
</svg>

<svg width="1360" height="702" style="z-index:10"><defs><filter id="sh" x="-30%" y="-30%" width="160%" height="160%"><feDropShadow dx="1" dy="3" stdDeviation="2.5" flood-color="#000" flood-opacity="0.55"/></filter></defs>
<path d="M59.71 88.37 L91.80 70.30 L59.46 52.68 A20.40 20.40 0 1 0 59.71 88.37 Z" fill="#0eac8c" filter="url(#sh)"/>
<path d="M50.3 67.2 L55.6 63.6 L55.6 79" fill="none" stroke="#fff" stroke-width="2.4" stroke-linejoin="miter"/>
<path d="M113.23 201.92 L147.00 218.00 L142.23 180.90 A20.40 20.40 0 1 0 113.23 201.92 Z" fill="#0eac8c" filter="url(#sh)"/>
<text x="124.2" y="187.3" transform="rotate(55 124.2 187.3)" font-family="Liberation Sans" font-size="22" fill="#fff" stroke="#fff" stroke-width="0.4" text-anchor="middle" dominant-baseline="central">3</text>
<path d="M29.51 277.81 L62.50 294.00 L58.80 257.44 A20.40 20.40 0 1 0 29.51 277.81 Z" fill="#0eac8c" filter="url(#sh)"/>
<text x="40.0" y="264.0" transform="rotate(55 40.0 264.0)" font-family="Liberation Sans" font-size="22" fill="#fff" stroke="#fff" stroke-width="0.4" text-anchor="middle" dominant-baseline="central">2</text>
<path d="M32.33 648.34 L69.00 654.30 L54.35 620.15 A20.40 20.40 0 1 0 32.33 648.34 Z" fill="#0eac8c" filter="url(#sh)"/>
<text x="39.5" y="631.6" transform="rotate(38 39.5 631.6)" font-family="Liberation Sans" font-size="22" fill="#fff" stroke="#fff" stroke-width="0.4" text-anchor="middle" dominant-baseline="central">4</text>
<path d="M1137.22 690.50 L1170.20 672.50 L1137.22 654.50 A20.50 20.50 0 1 0 1137.22 690.50 Z" fill="#0eac8c" filter="url(#sh)"/>
<text x="1131.6" y="673.0" transform="rotate(0 1131.6 673.0)" font-family="Liberation Sans" font-size="22" fill="#fff" stroke="#fff" stroke-width="0.4" text-anchor="middle" dominant-baseline="central">5</text>
</svg>

</body></html>
